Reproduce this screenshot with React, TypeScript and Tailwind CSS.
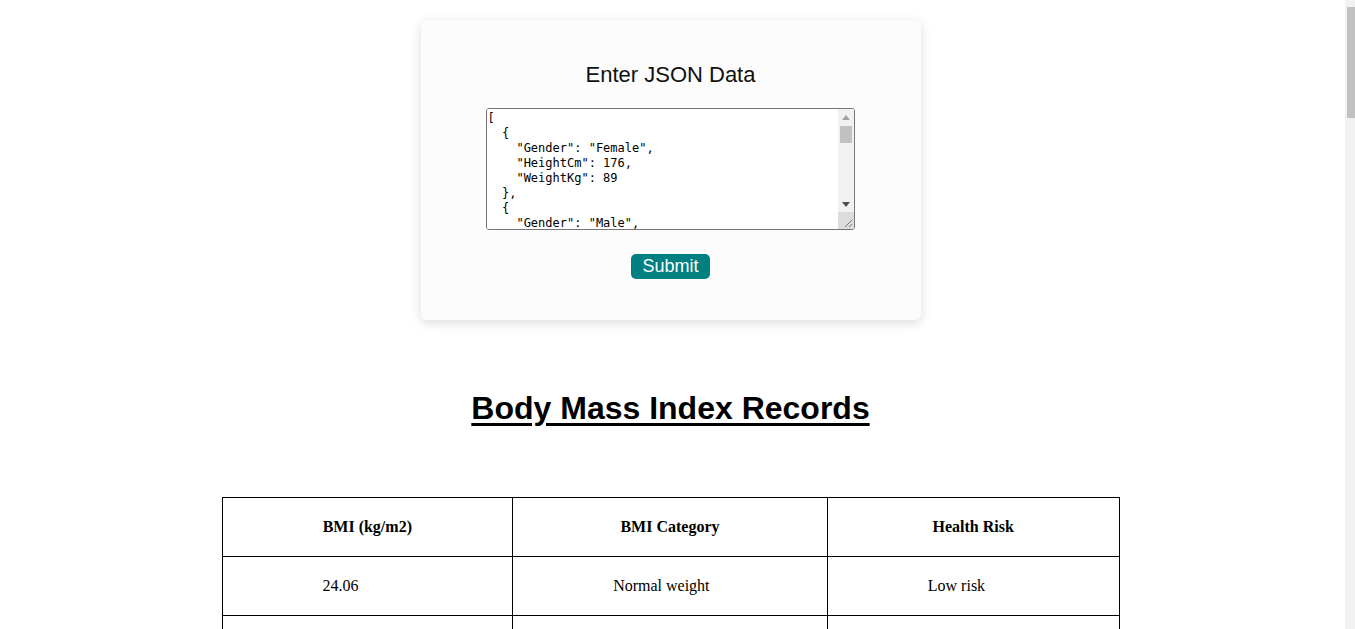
import { useState } from 'react';

const sample = [
  { Gender: 'Female', HeightCm: 176, WeightKg: 89 },
  { Gender: 'Male', HeightCm: 180, WeightKg: 78 },
  { Gender: 'Male', HeightCm: 165, WeightKg: 70 },
  { Gender: 'Female', HeightCm: 160, WeightKg: 55 },
];

const rows = [
  { bmi: '24.06', category: 'Normal weight', risk: 'Low risk' },
  { bmi: '28.73', category: 'Overweight', risk: 'Enhanced risk' },
  { bmi: '25.71', category: 'Overweight', risk: 'Enhanced risk' },
  { bmi: '21.48', category: 'Normal weight', risk: 'Low risk' },
];

function JsonBox({ value, onChange }: { value: string; onChange: (v: string) => void }) {
  return (
    <div className="mt-[22px] flex h-[122px] w-[369px] overflow-hidden rounded-[3px] border border-[#767676] bg-white">
      <textarea
        value={value}
        onChange={(e) => onChange(e.target.value)}
        spellCheck={false}
        className="h-full min-w-0 flex-1 resize-none overflow-hidden bg-white px-[1px] pt-[2px] font-['DejaVu_Sans_Mono',monospace] text-[12px] leading-[15px] text-black outline-none"
      />
      <div className="flex w-[16px] shrink-0 flex-col bg-[#f1f1f1]">
        <div className="flex h-[16px] items-center justify-center">
          <svg width="8" height="5" viewBox="0 0 8 5">
            <path d="M0 5 L4 0 L8 5 Z" fill="#a3a3a3" />
          </svg>
        </div>
        <div className="mx-[2px] mt-[1px] h-[17px] bg-[#c1c1c1]" />
        <div className="flex-1" />
        <div className="flex h-[16px] items-center justify-center">
          <svg width="8" height="5" viewBox="0 0 8 5">
            <path d="M0 0 L8 0 L4 5 Z" fill="#505050" />
          </svg>
        </div>
        <div className="flex h-[17px] items-end justify-end bg-[#dcdcdc] p-[1px]">
          <svg width="10" height="10" viewBox="0 0 10 10">
            <path d="M9 2 L2 9 M9 6 L6 9" stroke="#7a7a7a" strokeWidth="1" />
          </svg>
        </div>
      </div>
    </div>
  );
}

export default function App() {
  const [text, setText] = useState(JSON.stringify(sample, null, 2));

  return (
    <div className="flex bg-white font-['Liberation_Sans',Arial,sans-serif]">
      <main className="min-w-0 flex-1 pt-5 pb-10">
        <div className="mx-auto w-[500px] rounded-[6px] bg-[#fcfcfc] px-[65px] pt-[43px] pb-[41px] shadow-[0_3px_12px_rgba(0,0,0,0.14)]">
          <h2 className="text-center text-[22px] leading-[23px] text-[#111]">Enter JSON Data</h2>
          <JsonBox value={text} onChange={setText} />
          <div className="mt-6 flex justify-center">
            <button className="h-[25px] rounded-[5px] bg-[#008080] px-[11px] text-[18px] leading-[25px] text-white">
              Submit
            </button>
          </div>
        </div>

        <h1 className="mt-[70px] text-center text-[32px] leading-[37px] font-bold text-black underline underline-offset-[4px]">
          Body Mass Index Records
        </h1>

        <table className="mx-auto mt-[70px] w-[898px] border-collapse font-['Liberation_Serif','Times_New_Roman',serif] text-[16px] text-black">
          <thead>
            <tr className="h-[59px]">
              <th className="w-[291px] border border-black font-bold">BMI (kg/m2)</th>
              <th className="w-[315px] border border-black font-bold">BMI Category</th>
              <th className="w-[292px] border border-black font-bold">Health Risk</th>
            </tr>
          </thead>
          <tbody>
            {rows.map((r, i) => (
              <tr key={i} className="h-[59px]">
                <td className="border border-black pl-[100px]">{r.bmi}</td>
                <td className="border border-black pl-[100px]">{r.category}</td>
                <td className="border border-black pl-[100px]">{r.risk}</td>
              </tr>
            ))}
          </tbody>
        </table>
      </main>

      <aside className="sticky top-0 flex h-[629px] w-[14px] shrink-0 justify-end">
        <div className="w-[10px] bg-[#f1f1f1] pt-[7px] pl-[2px]">
          <div className="h-[111px] w-[8px] bg-[#c1c1c1]" />
        </div>
      </aside>
    </div>
  );
}
